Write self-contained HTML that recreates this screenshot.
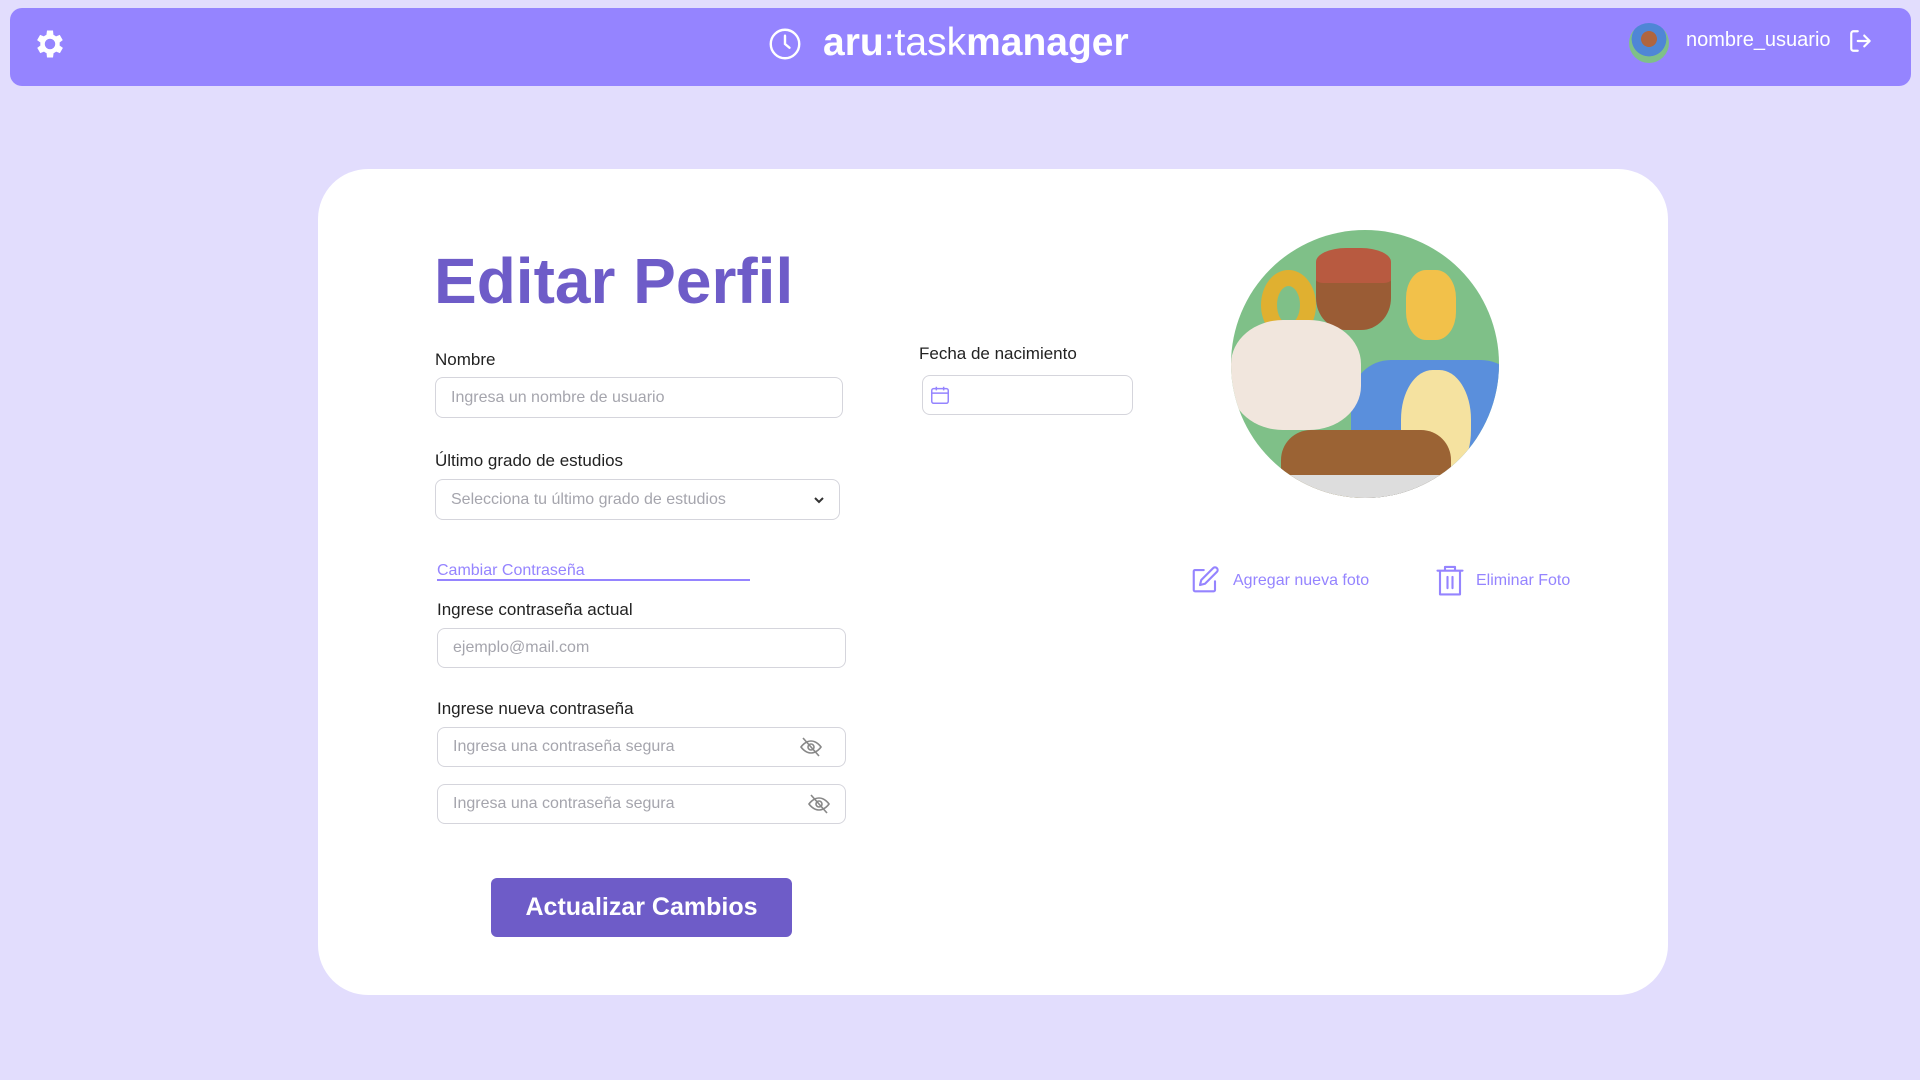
<!DOCTYPE html>
<html><head><meta charset="utf-8"><style>
*{box-sizing:border-box;margin:0;padding:0}
body{width:1920px;height:1080px;background:#e2ddfd;font-family:"Liberation Sans",sans-serif;position:relative;overflow:hidden;color:#222}
.hdr{position:absolute;left:10px;top:8px;width:1901px;height:78px;background:#9584ff;border-radius:12px}
.abs{position:absolute}
.card{position:absolute;left:318px;top:169px;width:1350px;height:826px;background:#fff;border-radius:50px}
.lbl{position:absolute;font-size:17px;color:#222}
.inp{position:absolute;border:1.5px solid #d5d5dc;border-radius:8px;background:#fff;font-size:16px;color:#a5a5ad;padding-left:15px;display:flex;align-items:center}
.lnk{color:#9584ff;font-size:16px}
</style></head><body>
<div class="hdr"></div>
<svg class="abs" style="left:32px;top:26px" width="36" height="36" viewBox="0 0 24 24"><path fill="#fff" d="M19.4 13a7.5 7.5 0 0 0 0-2l2.1-1.6-2-3.5-2.5 1a7.6 7.6 0 0 0-1.7-1L15 3h-4l-.4 2.9a7.6 7.6 0 0 0-1.7 1l-2.5-1-2 3.5L6.6 11a7.5 7.5 0 0 0 0 2l-2.1 1.6 2 3.5 2.5-1a7.6 7.6 0 0 0 1.7 1L11 21h4l.4-2.9a7.6 7.6 0 0 0 1.7-1l2.5 1 2-3.5zM13 15.5a3.5 3.5 0 1 1 0-7 3.5 3.5 0 0 1 0 7z" transform="translate(-1 0)"/></svg>
<svg class="abs" style="left:767px;top:26px" width="36" height="36" viewBox="0 0 24 24" fill="none" stroke="#fff" stroke-width="1.6"><circle cx="12" cy="12" r="9.5"/><path d="M12 6.5V12l3 2.5" stroke-linecap="round"/></svg>
<div class="abs" style="left:823px;top:18px;font-size:39px;color:#fff;line-height:50px"><b>aru</b>:task<b>manager</b></div>
<div class="abs" style="left:1629px;top:23px;width:40px;height:40px;border-radius:50%;background:radial-gradient(circle at 50% 40%,#b0653f 0 25%,#4f86d6 26% 55%,#7fc088 56%)"></div>
<div class="abs" style="left:1686px;top:29px;font-size:20px;color:#fff">nombre_usuario</div>
<svg class="abs" style="left:1848px;top:28px" width="26" height="26" viewBox="0 0 24 24" fill="none" stroke="#fff" stroke-width="2" stroke-linecap="round" stroke-linejoin="round"><path d="M9 3H5a2 2 0 0 0-2 2v14a2 2 0 0 0 2 2h4M15 7l5 5-5 5M20 12H9"/></svg>
<div class="card"></div>
<div class="abs" style="left:434px;top:241px;font-size:64px;font-weight:bold;color:#6e5cc8;line-height:80px">Editar Perfil</div>
<div class="lbl" style="left:435px;top:350px">Nombre</div>
<div class="inp" style="left:435px;top:377px;width:408px;height:41px">Ingresa un nombre de usuario</div>
<div class="lbl" style="left:435px;top:451px">Último grado de estudios</div>
<div class="inp" style="left:435px;top:479px;width:405px;height:41px">Selecciona tu último grado de estudios</div>
<svg class="abs" style="left:812px;top:493px" width="14" height="14" viewBox="0 0 14 14" fill="none" stroke="#333" stroke-width="2"><path d="M3 5l4 4 4-4"/></svg>
<div class="abs lnk" style="left:437px;top:562px">Cambiar Contraseña</div>
<div class="abs" style="left:437px;top:579px;width:313px;height:2px;background:#9584ff"></div>
<div class="lbl" style="left:437px;top:600px">Ingrese contraseña actual</div>
<div class="inp" style="left:437px;top:628px;width:409px;height:40px">ejemplo@mail.com</div>
<div class="lbl" style="left:437px;top:699px">Ingrese nueva contraseña</div>
<div class="inp" style="left:437px;top:727px;width:409px;height:40px">Ingresa una contraseña segura</div>
<div class="inp" style="left:437px;top:784px;width:409px;height:40px">Ingresa una contraseña segura</div>
<svg class="abs" style="left:799px;top:736px" width="24" height="22" viewBox="0 0 24 22" fill="none" stroke="#888" stroke-width="1.6"><path d="M2 11s4-6 10-6 10 6 10 6-4 6-10 6S2 11 2 11z"/><circle cx="12" cy="11" r="3"/><path d="M4 2l16 18"/></svg>
<svg class="abs" style="left:807px;top:793px" width="24" height="22" viewBox="0 0 24 22" fill="none" stroke="#888" stroke-width="1.6"><path d="M2 11s4-6 10-6 10 6 10 6-4 6-10 6S2 11 2 11z"/><circle cx="12" cy="11" r="3"/><path d="M4 2l16 18"/></svg>
<div class="abs" style="left:491px;top:878px;width:301px;height:59px;background:#6e5cc8;border-radius:6px;color:#fff;font-size:25px;font-weight:bold;display:flex;align-items:center;justify-content:center">Actualizar Cambios</div>
<div class="lbl" style="left:919px;top:344px">Fecha de nacimiento</div>
<div class="inp" style="left:922px;top:375px;width:211px;height:40px"></div>
<svg class="abs" style="left:929px;top:384px" width="22" height="22" viewBox="0 0 24 24" fill="none" stroke="#9584ff" stroke-width="1.6"><rect x="3" y="5" width="18" height="16" rx="2"/><path d="M3 10h18M8 3v4M16 3v4"/></svg>
<div class="abs" style="left:1231px;top:230px;width:268px;height:268px;border-radius:50%;overflow:hidden;background:#7fc088">
<div class="abs" style="left:120px;top:130px;width:170px;height:150px;border-radius:40px;background:#5a8fdc"></div>
<div class="abs" style="left:85px;top:20px;width:75px;height:80px;border-radius:40%;background:#9a5c35"></div>
<div class="abs" style="left:85px;top:18px;width:75px;height:35px;border-radius:40% 40% 10% 10%;background:#b85a40"></div>
<div class="abs" style="left:30px;top:40px;width:55px;height:70px;border-radius:50%;border:16px solid #e0b030"></div>
<div class="abs" style="left:175px;top:40px;width:50px;height:70px;border-radius:40%;background:#f2c14a"></div>
<div class="abs" style="left:0;top:90px;width:130px;height:110px;border-radius:40%;background:#f1e6dd"></div>
<div class="abs" style="left:170px;top:140px;width:70px;height:110px;border-radius:45%;background:#f5e2a0"></div>
<div class="abs" style="left:50px;top:200px;width:170px;height:70px;border-radius:30px;background:#9b6334"></div>
<div class="abs" style="left:40px;top:245px;width:190px;height:30px;background:#ddd"></div>
</div>
<svg class="abs" style="left:1190px;top:565px" width="30" height="30" viewBox="0 0 24 24" fill="none" stroke="#9584ff" stroke-width="1.7" stroke-linecap="round" stroke-linejoin="round"><path d="M11 4H4a1 1 0 0 0-1 1v15a1 1 0 0 0 1 1h15a1 1 0 0 0 1-1v-7"/><path d="M18.5 2.5a2.1 2.1 0 0 1 3 3L12 15l-4 1 1-4z"/></svg>
<div class="abs lnk" style="left:1233px;top:572px">Agregar nueva foto</div>
<svg class="abs" style="left:1435px;top:563px" width="30" height="34" viewBox="0 0 24 27" fill="none" stroke="#9584ff" stroke-width="1.7" stroke-linecap="round" stroke-linejoin="round"><path d="M2 6h20M8 6V3h8v3M4 6v19h16V6M10 11v9M14 11v9"/></svg>
<div class="abs lnk" style="left:1476px;top:572px">Eliminar Foto</div>
</body></html>
